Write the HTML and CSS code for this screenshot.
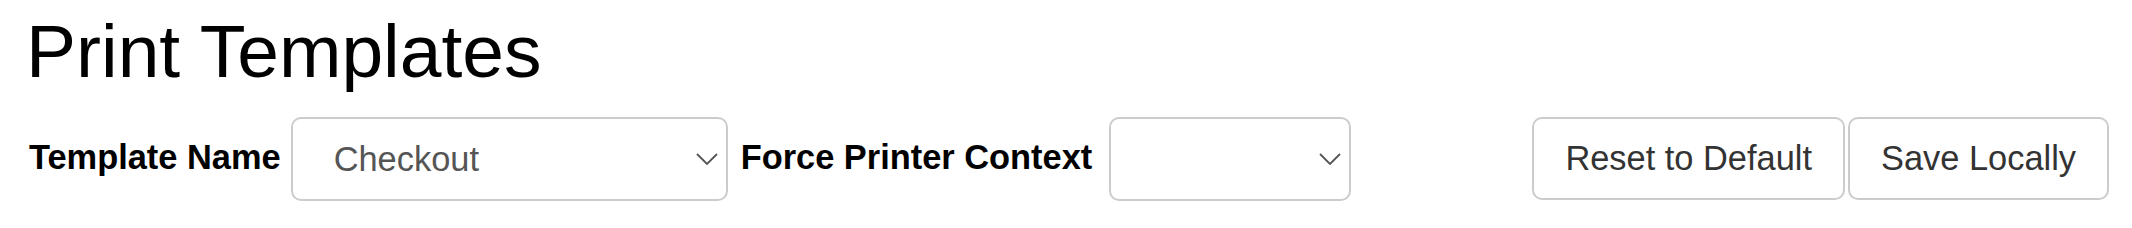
FILE: index.html
```html
<!DOCTYPE html>
<html lang="en">
<head>
<meta charset="utf-8">
<title>Print Templates</title>
<link rel="stylesheet" href="styles.css">
</head>
<body>
<div class="page">
  <h1 class="title">Print Templates</h1>
  <div class="toolbar">
    <label class="field-label" for="tpl">Template Name</label>
    <div class="select-wrap select-wide">
      <select id="tpl" class="select"><option>Checkout</option></select>
      <svg class="chevron" width="22" height="12" viewBox="0 0 22 12"><polyline points="1,1 11,11 21,1" fill="none" stroke="#555" stroke-width="1.8"/></svg>
    </div>
    <label class="field-label field-label-wide" for="ctx">Force Printer Context</label>
    <div class="select-wrap select-narrow">
      <select id="ctx" class="select"><option></option></select>
      <svg class="chevron" width="22" height="12" viewBox="0 0 22 12"><polyline points="1,1 11,11 21,1" fill="none" stroke="#555" stroke-width="1.8"/></svg>
    </div>
    <div class="actions">
      <button class="btn" type="button">Reset to Default</button>
      <button class="btn" type="button">Save Locally</button>
    </div>
  </div>
</div>
</body>
</html>
```
FILE: styles.css
```css
html, body {
  margin: 0;
  padding: 0;
  background: #fff;
}

.page {
  font-family: "Liberation Sans", Arial, sans-serif;
  padding: 0 23px 0 29px;
}

.title {
  margin: 14px 0 29px -3px;
  font-size: 75px;
  line-height: 74px;
  font-weight: normal;
  color: #000;
}

.toolbar {
  display: flex;
  align-items: center;
  height: 84px;
}

.field-label {
  font-size: 34.4px;
  line-height: 1;
  font-weight: bold;
  color: #000;
  margin: 0 10px 4px 0;
}

.field-label-wide {
  margin-right: 17px;
}

.select-wrap {
  position: relative;
  height: 84px;
  margin-right: 13px;
}

.select-wide { width: 437px; }
.select-narrow { width: 242px; }

.select {
  appearance: none;
  -webkit-appearance: none;
  box-sizing: border-box;
  width: 100%;
  height: 100%;
  margin: 0;
  padding: 0 40px 0 41px;
  border: 2px solid #ccc;
  border-radius: 10px;
  background: #fff;
  font-family: "Liberation Sans", Arial, sans-serif;
  font-size: 34.4px;
  color: #555;
}

.chevron {
  position: absolute;
  right: 10px;
  top: 50%;
  transform: translateY(-50%);
  pointer-events: none;
}

.actions {
  margin-left: auto;
  display: flex;
  gap: 3px;
  align-self: flex-start;
}

.btn {
  box-sizing: border-box;
  height: 83px;
  margin: 0;
  padding: 0 31px;
  border: 2px solid #ccc;
  border-radius: 10px;
  background: #fff;
  font-family: "Liberation Sans", Arial, sans-serif;
  font-size: 34.4px;
  color: #333;
  white-space: nowrap;
}
```
